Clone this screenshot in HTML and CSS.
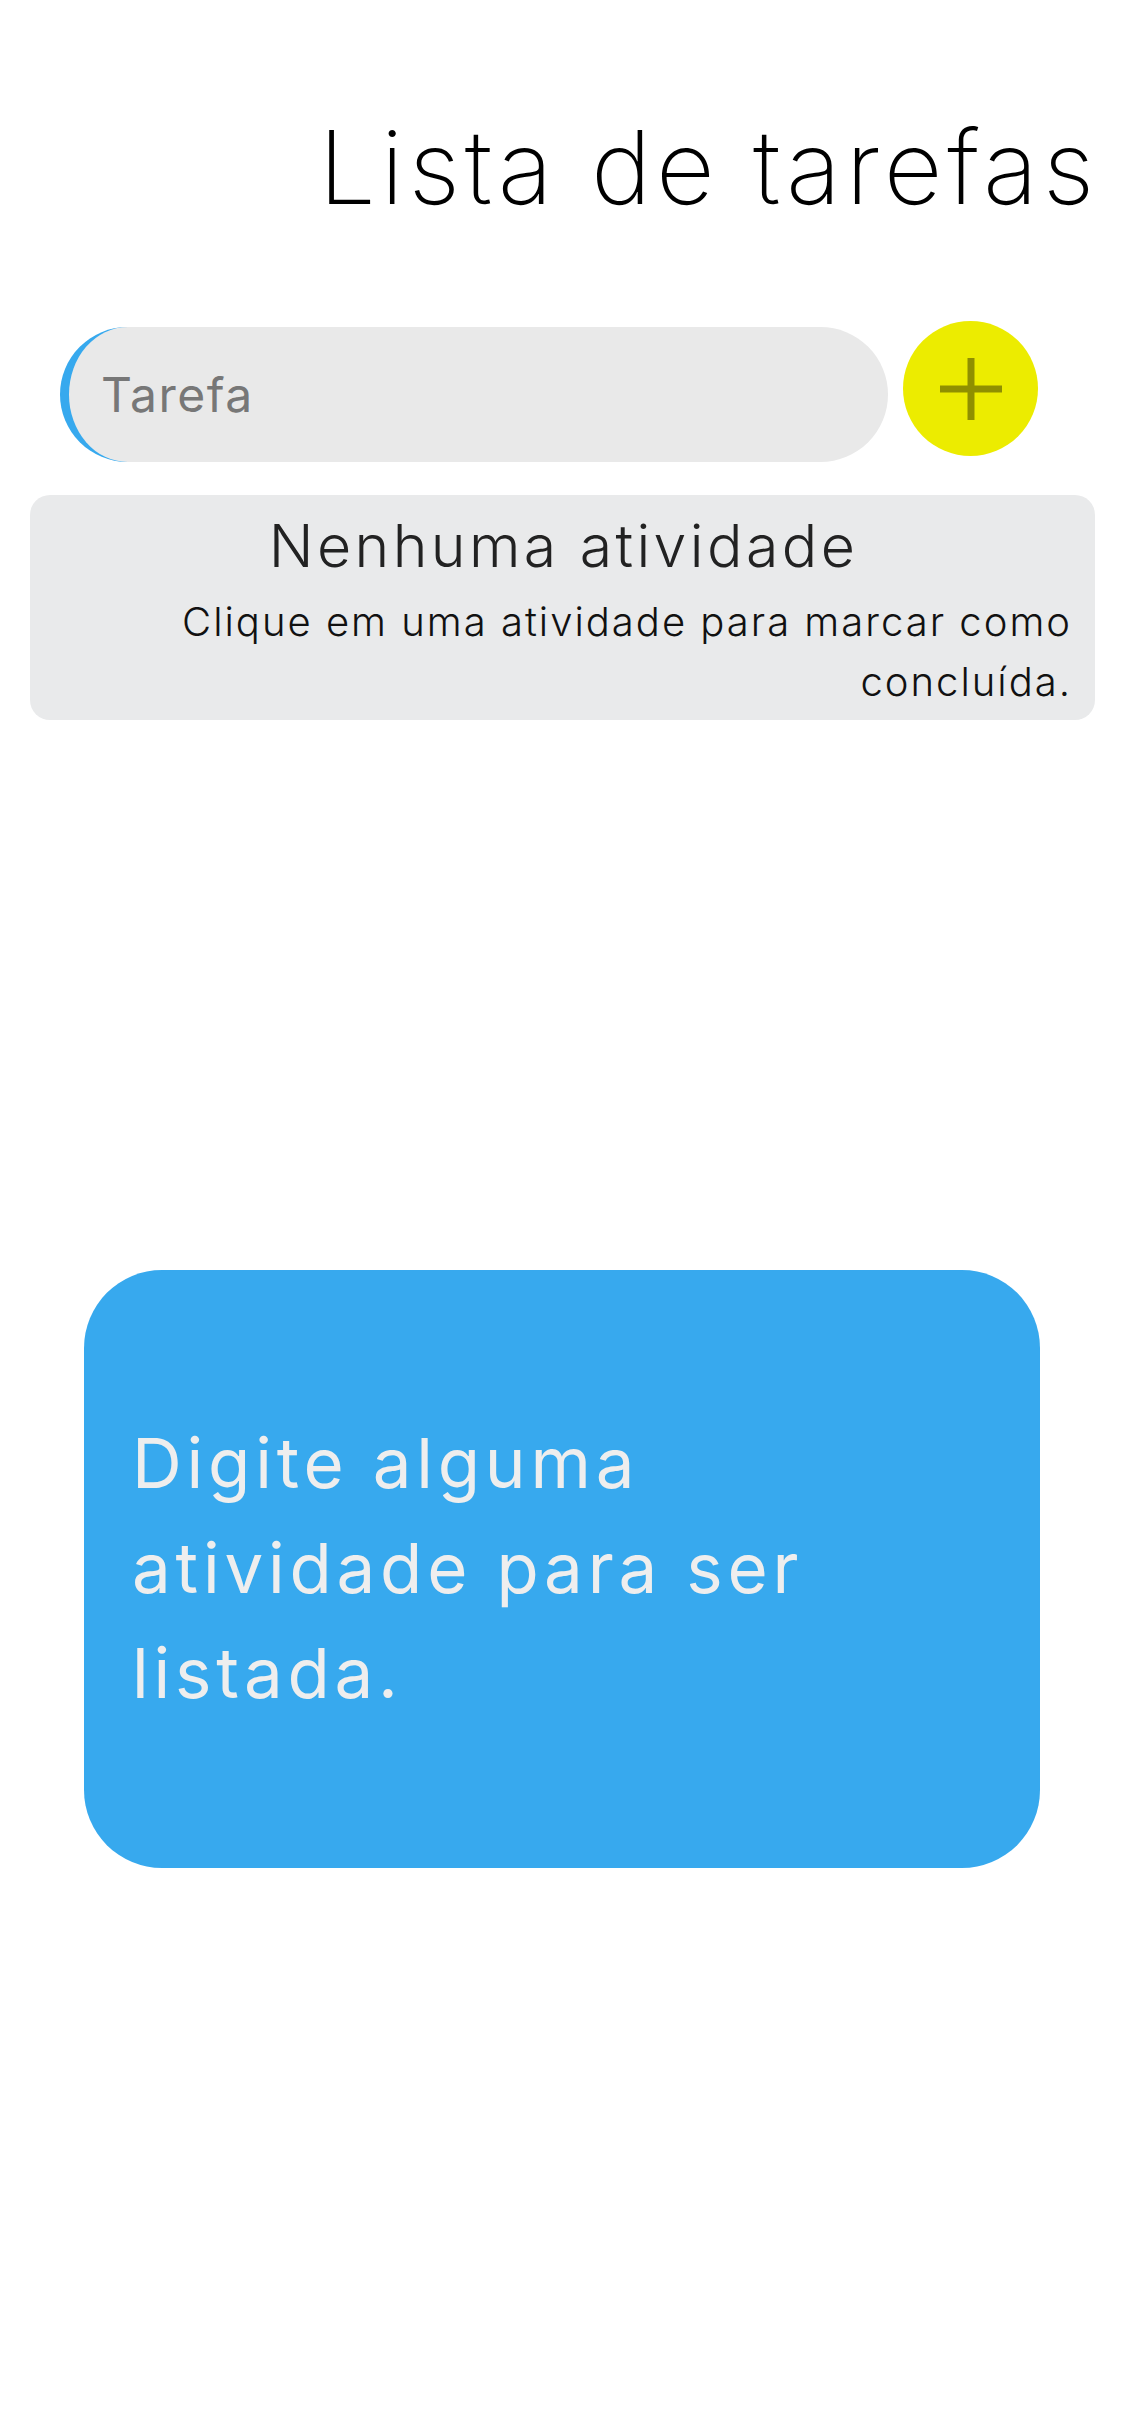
FILE: index.html
```html
<!DOCTYPE html>
<html lang="pt-BR">
<head>
<meta charset="utf-8">
<title>Lista de tarefas</title>
<link rel="stylesheet" href="styles.css">
</head>
<body>
<main class="app">
  <h1 class="title">Lista de tarefas</h1>
  <form class="add-row">
    <input class="task-input" type="text" placeholder="Tarefa">
    <button class="add-btn" type="button" aria-label="Adicionar">
      <svg viewBox="0 0 62 62" width="62" height="62" aria-hidden="true">
        <rect x="0" y="27.5" width="62" height="7" fill="#8f8f00"/>
        <rect x="27.5" y="0" width="7" height="62" fill="#8f8f00"/>
      </svg>
    </button>
  </form>
  <section class="list-card">
    <h2 class="list-empty">Nenhuma atividade</h2>
    <p class="list-hint">Clique em uma atividade para marcar como concluída.</p>
  </section>
  <section class="notice">
    <p class="notice-text">Digite alguma atividade para ser listada.</p>
  </section>
</main>
</body>
</html>
```

FILE: styles.css
```css
* { box-sizing: border-box; }

html, body {
  margin: 0;
  padding: 0;
  background: #ffffff;
}

body {
  font-family: "Inter", "Noto Sans", sans-serif;
  color: #000;
}

.app {
  width: 1125px;
  min-height: 2436px;
  display: flex;
  flex-direction: column;
}

.title {
  margin: 106px 26px 0 0;
  font-size: 102px;
  line-height: 122px;
  font-weight: 200;
  letter-spacing: 4.8px;
  text-align: right;
  color: #000;
}

.add-row {
  margin: 93px 0 0 60px;
  display: flex;
  align-items: flex-start;
  gap: 15px;
}

.task-input {
  margin-top: 6px;
  width: 828px;
  height: 135px;
  border: none;
  border-left: 9px solid #37a9ee;
  border-radius: 68px;
  background: #e9e9e9;
  padding: 0 0 0 32px;
  font-family: inherit;
  font-size: 48px;
  font-weight: 400;
  letter-spacing: 1.5px;
  color: #333;
  outline: none;
}

.task-input::placeholder {
  color: #777;
}

.add-btn {
  width: 135px;
  height: 135px;
  border: none;
  border-radius: 50%;
  background: #ecec00;
  padding: 0;
  display: flex;
  align-items: center;
  justify-content: center;
}

.list-card {
  margin: 33px 30px 0 30px;
  background: #e9eaeb;
  border-radius: 20px;
  padding: 11px 23px 8px 25px;
}

.list-empty {
  margin: 0;
  font-size: 59px;
  line-height: 80px;
  font-weight: 300;
  letter-spacing: 3.4px;
  text-align: center;
  color: #222;
}

.list-hint {
  margin: 6px 0 0 0;
  font-size: 40px;
  line-height: 60px;
  font-weight: 300;
  letter-spacing: 2px;
  text-align: right;
  color: #111;
}

.notice {
  margin: 550px 85px 0 84px;
  background: #37a9ee;
  border-radius: 78px;
  padding: 141px 70px 142px 48px;
}

.notice-text {
  margin: 0;
  font-size: 69px;
  line-height: 105px;
  font-weight: 400;
  letter-spacing: 4.8px;
  color: #eeeeee;
}
```
